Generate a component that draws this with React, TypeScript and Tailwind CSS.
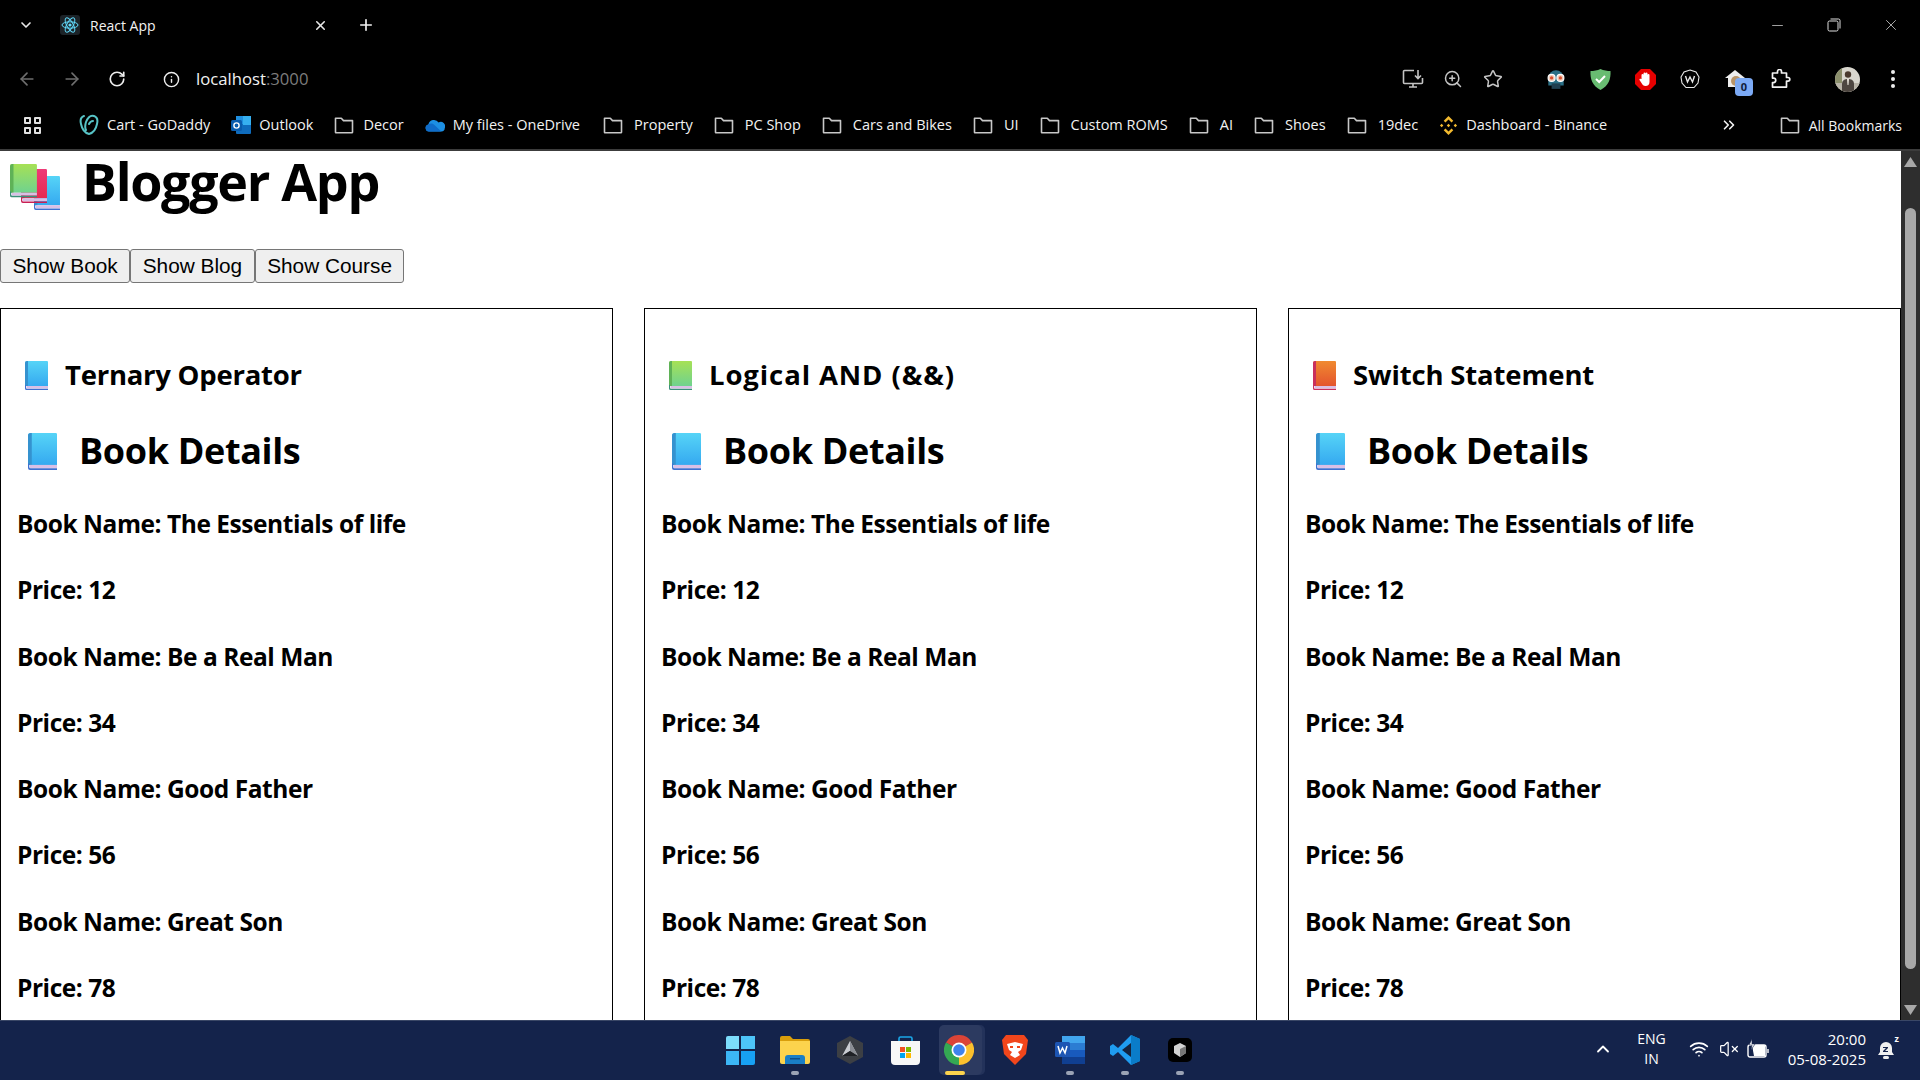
import React from 'react';
import { ChevronDown, X, Plus, ArrowLeft, ArrowRight, RotateCw, Info, Star, ZoomIn, ChevronsRight, ChevronUp, Wifi, VolumeX, Minus } from 'lucide-react';

const bookRows = [
  'Book Name: The Essentials of life',
  'Price: 12',
  'Book Name: Be a Real Man',
  'Price: 34',
  'Book Name: Good Father',
  'Price: 56',
  'Book Name: Great Son',
  'Price: 78',
];

const cards = [
  { title: 'Ternary Operator', tone: 'blue', spacing: 'tracking-[-0.25px]' },
  { title: 'Logical AND (&&)', tone: 'green', spacing: 'tracking-[0.9px]' },
  { title: 'Switch Statement', tone: 'orange', spacing: 'tracking-[-0.15px]' },
];

const tones: Record<string, { top: string; bottom: string; spine: string; edge: string }> = {
  blue: { top: '#56d4f7', bottom: '#35a9f0', spine: '#3592cf', edge: '#3f6fd0' },
  green: { top: '#a6e155', bottom: '#6fd28f', spine: '#5fb257', edge: '#3a8f7a' },
  orange: { top: '#f08a30', bottom: '#e4542e', spine: '#c9305c', edge: '#c9305c' },
  pink: { top: '#ee3a78', bottom: '#e62a50', spine: '#c81f55', edge: '#c81f55' },
};

function GradientDefs() {
  return (
    <svg className="absolute w-0 h-0">
      <defs>
        {Object.keys(tones).map((tone) => (
          <linearGradient key={tone} id={`book-${tone}`} x1="0" y1="0" x2="0" y2="1">
            <stop offset="0" stopColor={tones[tone].top} />
            <stop offset="1" stopColor={tones[tone].bottom} />
          </linearGradient>
        ))}
      </defs>
    </svg>
  );
}

function BookShape({ tone }: { tone: string }) {
  const t = tones[tone];
  return (
    <>
      <path d="M2 0h20a1 1 0 0 1 1 1v24H0V2a2 2 0 0 1 2-2z" fill={`url(#book-${tone})`} />
      <path d="M2 0h1v25H0V2a2 2 0 0 1 2-2z" fill={t.spine} />
      <rect x="1.500" y="25" width="21.500" height="2.400" fill="#d9bfe6" />
      <path d="M0 24v3.400A1.600 1.600 0 0 0 1.600 29H23v-1.300H2a1 1 0 0 1-1-1V24z" fill={t.edge} />
    </>
  );
}

function BookIcon({ tone, className }: { tone: string; className: string }) {
  return (
    <svg viewBox="0 0 23 29" preserveAspectRatio="none" className={className}>
      <BookShape tone={tone} />
    </svg>
  );
}

function FolderIcon() {
  return (
    <svg viewBox="0 0 20 18" className="w-[20px] h-[18px] shrink-0" fill="none" stroke="#c8c8c8" strokeWidth="1.600">
      <path d="M1.500 2.200h5.800l2.200 2.400h9v11.600a.6.6 0 0 1-.6.6H2.100a.6.6 0 0 1-.6-.6z" strokeLinejoin="round" />
    </svg>
  );
}

function GoDaddyIcon() {
  return (
    <svg viewBox="0 0 20 22" className="w-[20px] h-[22px] shrink-0" fill="none" stroke="#57c3c6" strokeWidth="2" strokeLinecap="round">
      <path d="M5 2C2 3 1 6 2 10c1 5 4 9 8 10 4-1 7-5 8-10 1-4 0-7-3-8-3-1-6 1-8 6-1 3-1 6 0 8" />
      <path d="M10 10c1-2 3-3 4-3" />
    </svg>
  );
}

function OutlookIcon() {
  return (
    <svg viewBox="0 0 20 20" className="w-[20px] h-[20px] shrink-0">
      <rect x="5" y="1" width="15" height="9" fill="#1f8fe0" />
      <rect x="5" y="9" width="15" height="10" rx="1" fill="#0f6cbd" />
      <rect x="12" y="1" width="8" height="9" fill="#36b0f0" />
      <rect x="0" y="5" width="11" height="11" rx="1.500" fill="#0a5cad" />
      <circle cx="5.500" cy="10.500" r="2.600" fill="none" stroke="#fff" strokeWidth="1.400" />
    </svg>
  );
}

function OneDriveIcon() {
  return (
    <svg viewBox="0 0 20 14" className="w-[20px] h-[14px] shrink-0">
      <path d="M4 13.500a3.600 3.600 0 0 1-.6-7.100A5.600 5.600 0 0 1 13.600 4.500 4.400 4.400 0 0 1 19.800 10a3.600 3.600 0 0 1-3.400 3.500z" fill="#1c8fe3" />
      <path d="M4 13.500a3.600 3.600 0 0 1-.6-7.100 5 5 0 0 1 6 .6l7 6.500z" fill="#0f6cc9" />
    </svg>
  );
}

function BinanceIcon() {
  return (
    <svg viewBox="0 0 20 20" className="w-[19px] h-[19px] shrink-0" fill="#f3ba2f">
      <path d="M10 0l5 5-1.800 1.800L10 3.600 6.800 6.800 5 5z" />
      <path d="M10 20l5-5-1.800-1.800L10 16.400l-3.200-3.200L5 15z" />
      <path d="M2.800 8.200L4.600 10l-1.800 1.800L1 10zM17.200 8.200L19 10l-1.800 1.800L15.400 10zM10 8.200l1.800 1.800L10 11.800 8.200 10z" />
    </svg>
  );
}

function ReactFavicon() {
  return (
    <svg viewBox="0 0 20 20" className="w-[20px] h-[20px] shrink-0 rounded-[3px] bg-[#1c2328]" fill="none" stroke="#61dafb" strokeWidth="1">
      <circle cx="10" cy="10" r="1.600" fill="#61dafb" stroke="none" />
      <ellipse cx="10" cy="10" rx="8" ry="3.200" />
      <ellipse cx="10" cy="10" rx="8" ry="3.200" transform="rotate(60 10 10)" />
      <ellipse cx="10" cy="10" rx="8" ry="3.200" transform="rotate(120 10 10)" />
    </svg>
  );
}

function ToolbarExtras() {
  return (
    <div className="flex items-center">
      {/* install app */}
      <div className="w-[40px] flex justify-center">
        <svg viewBox="0 0 22 20" className="w-[22px] h-[20px]" fill="none" stroke="#c4c4c4" strokeWidth="1.600">
          <path d="M12 1.500H2.500a1 1 0 0 0-1 1v11a1 1 0 0 0 1 1h17a1 1 0 0 0 1-1V9" />
          <path d="M16 1v8M13 6.500l3 3 3-3M7 18h8M11 15v3" />
        </svg>
      </div>
      <div className="w-[40px] flex justify-center"><ZoomIn size={20} color="#c4c4c4" strokeWidth={1.800} /></div>
      <div className="w-[40px] flex justify-center"><Star size={20} color="#c4c4c4" strokeWidth={1.800} /></div>
      <div className="w-[20px]" />
      {/* extensions */}
      <div className="w-[45px] flex justify-center">
        <svg viewBox="0 0 20 20" className="w-[22px] h-[22px]">
          <path d="M3 9a7 7 0 0 1 14 0v7H3z" fill="#2a6f86" />
          <circle cx="6" cy="9" r="3.200" fill="#f1c9b5" stroke="#fff" strokeWidth="1" />
          <circle cx="14" cy="9" r="3.200" fill="#f1c9b5" stroke="#fff" strokeWidth="1" />
          <circle cx="6" cy="9" r="1.500" fill="#d8502f" />
          <circle cx="14" cy="9" r="1.500" fill="#d8502f" />
          <path d="M6 14h8v5H6z" fill="#1f3f50" />
        </svg>
      </div>
      <div className="w-[45px] flex justify-center">
        <svg viewBox="0 0 21 21" className="w-[21px] h-[21px]">
          <path d="M10.500 0c3 1.500 7 2 10 2 .5 8-2 15-10 19C2.500 17 0 10 .500 2c3 0 7-.5 10-2z" fill="#68bc71" />
          <path d="M6 10l3.200 3L15 7" fill="none" stroke="#fff" strokeWidth="2" />
        </svg>
      </div>
      <div className="w-[45px] flex justify-center">
        <svg viewBox="0 0 21 21" className="w-[21px] h-[21px]">
          <path d="M6 0h9l6 6v9l-6 6H6l-6-6V6z" fill="#e60000" />
          <path d="M6.500 10V6a1 1 0 0 1 2 0V4.500a1 1 0 0 1 2 0 1 1 0 0 1 2 0V6a1 1 0 0 1 2 0v7c0 2.500-1.500 4-4 4-2 0-3-1-4-3l-2-3c-.5-1 .8-1.800 1.500-1z" fill="#fff" />
        </svg>
      </div>
      <div className="w-[44px] flex justify-center">
        <svg viewBox="0 0 20 20" className="w-[20px] h-[20px]" fill="none" stroke="#e8e8e8">
          <path d="M10 1l6 2 3 5-1 6-4 4.500H6L2 14 1 8l3-5z" strokeWidth="1.100" />
          <path d="M5.500 7l2 6 2.500-5 2.500 5 2-6" strokeWidth="1.400" />
        </svg>
      </div>
      <div className="w-[46px] flex justify-center relative">
        <svg viewBox="0 0 20 20" className="w-[20px] h-[20px]">
          <path d="M10 1l10 8h-3v9H3V9H0z" fill="#ededed" />
          <circle cx="11" cy="12" r="5" fill="#b89468" />
        </svg>
        <span className="absolute left-[23px] top-[9px] w-[18px] h-[18px] rounded-[4px] bg-[#7caaf5] text-[#10203c] text-[11px] font-bold flex items-center justify-center">0</span>
      </div>
      <div className="w-[46px] flex justify-center">
        <svg viewBox="0 0 20 20" className="w-[20px] h-[20px]" fill="none" stroke="#f2f2f2" strokeWidth="1.700" strokeLinejoin="round">
          <path d="M1.500 4h5V2.500a2 2 0 0 1 4 0V4h5v4.500h1.500a1.800 1.800 0 0 1 0 3.600h-1.500v6H1.500v-4.500h1a2 2 0 0 0 0-4.500h-1z" />
        </svg>
      </div>
      <div className="w-[20px]" />
      <div className="w-[46px] flex justify-center">
        <svg viewBox="0 0 25 25" className="w-[25px] h-[25px] rounded-full">
          <rect width="25" height="25" fill="#d9d7ce" />
          <rect x="0" y="0" width="7" height="25" fill="#8b8f6c" />
          <rect x="0" y="16" width="25" height="9" fill="#b8b4a8" />
          <circle cx="13" cy="7.500" r="3.200" fill="#4a3a2e" />
          <path d="M7 25v-8c0-4 3-5 6-5s6 1 6 5v8z" fill="#4d4640" />
          <path d="M12 12h2l-.5 6h-1z" fill="#e9e4da" />
        </svg>
      </div>
      <div className="w-[46px] flex flex-col items-center gap-[3px]">
        <span className="w-[4px] h-[4px] rounded-full bg-[#ececec]" />
        <span className="w-[4px] h-[4px] rounded-full bg-[#ececec]" />
        <span className="w-[4px] h-[4px] rounded-full bg-[#ececec]" />
      </div>
    </div>
  );
}

function BrowserChrome() {
  return (
    <div className="bg-black text-[#f2f2f2] h-[151px] border-b-2 border-[#3c3c3c] shrink-0 relative z-10 font-['Open_Sans',sans-serif]">
      {/* tab strip */}
      <div className="h-[50px] flex items-center">
        <ChevronDown size={16} strokeWidth={2.500} className="ml-[18px] text-[#e8e8e8]" />
        <div className="ml-[26px]"><ReactFavicon /></div>
        <span className="ml-[10px] w-[223px] text-[14px]">React App</span>
        <X size={15} strokeWidth={2.500} className="text-[#e8e8e8]" />
        <Plus size={18} strokeWidth={2.200} className="ml-[29px]" />
        <div className="ml-auto flex items-center pr-[20px] gap-[41px]">
          <Minus size={17} color="#a0a0a0" strokeWidth={1.400} />
          <svg viewBox="0 0 14 14" className="w-[14px] h-[14px]" fill="none" stroke="#e0e0e0" strokeWidth="1">
            <rect x="1" y="3" width="10" height="10" rx="1.500" />
            <path d="M3.500 1h8a1.500 1.500 0 0 1 1.500 1.500v8" />
          </svg>
          <X size={18} color="#e0e0e0" strokeWidth={1} />
        </div>
      </div>
      {/* toolbar */}
      <div className="h-[58px] flex items-center">
        <ArrowLeft size={20} color="#6e6e6e" className="ml-[17px]" />
        <ArrowRight size={20} color="#6e6e6e" className="ml-[25px]" />
        <RotateCw size={18} color="#eeeeee" strokeWidth={2.200} className="ml-[26px]" />
        <Info size={17} color="#eeeeee" className="ml-[37px]" />
        <span className="ml-[16px] text-[16.7px]">localhost<span className="text-[#7c7c7c]">:3000</span></span>
        <div className="ml-auto pr-[4px]"><ToolbarExtras /></div>
      </div>
      {/* bookmarks */}
      <div className="h-[34px] flex items-center text-[14.5px] whitespace-nowrap">
        <div className="ml-[24px] w-[17px] h-[17px] grid grid-cols-2 gap-[3px]">
          <span className="border-[2px] border-[#e0e0e0] rounded-[1px]" />
          <span className="border-[2px] border-[#e0e0e0] rounded-[1px]" />
          <span className="border-[2px] border-[#e0e0e0] rounded-[1px]" />
          <span className="border-[2px] border-[#e0e0e0] rounded-[1px]" />
        </div>
        <div className="ml-[38px] flex items-center gap-[21px]">
          <div className="flex items-center gap-[8px]"><GoDaddyIcon /><span>Cart - GoDaddy</span></div>
          <div className="flex items-center gap-[8px]"><OutlookIcon /><span>Outlook</span></div>
          <div className="flex items-center gap-[9px]"><FolderIcon /><span>Decor</span></div>
          <div className="flex items-center gap-[8px] mr-[2px]"><OneDriveIcon /><span>My files - OneDrive</span></div>
          {['Property', 'PC Shop', 'Cars and Bikes', 'UI', 'Custom ROMS', 'AI', 'Shoes', '19dec'].map((n) => (
            <div key={n} className="flex items-center gap-[11px]"><FolderIcon /><span>{n}</span></div>
          ))}
          <div className="flex items-center gap-[8px]"><BinanceIcon /><span>Dashboard - Binance</span></div>
        </div>
        <div className="ml-auto flex items-center pr-[18px]">
          <ChevronsRight size={18} strokeWidth={2.200} className="mr-[42px]" />
          <FolderIcon />
          <span className="ml-[9px] text-[14px]">All Bookmarks</span>
        </div>
      </div>
    </div>
  );
}

function Card({ title, tone, spacing }: { title: string; tone: string; spacing: string }) {
  return (
    <div className="border border-black px-[16px] pb-[40px] font-['Open_Sans',sans-serif] font-bold text-black">
      <div className={`h-[40px] mt-[46px] flex items-center text-[27.500px] ${spacing}`}>
        <BookIcon tone={tone} className="w-[23px] h-[29px] ml-[8px]" />
        <span className="ml-[17px]">{title}</span>
      </div>
      <div className="h-[48px] mt-[32px] -mb-[1px] flex items-center text-[36px] tracking-[-0.35px]">
        <BookIcon tone="blue" className="w-[29px] h-[37px] ml-[11px]" />
        <span className="ml-[22px]">Book Details</span>
      </div>
      {bookRows.map((row, idx) => (
        <p key={idx} className="h-[32px] mt-[34.300px] flex items-center text-[24.500px] tracking-[-0.45px]">{row}</p>
      ))}
    </div>
  );
}

function Scrollbar() {
  return (
    <div className="w-[19px] shrink-0 bg-[#2e2e2e] flex flex-col items-center">
      <svg viewBox="0 0 13 10" className="w-[13px] h-[10px] mt-[6px] shrink-0" fill="#a8a8a8"><path d="M6.500 0L13 10H0z" /></svg>
      <div className="w-[11px] mt-[41px] flex-1 bg-[#a8a8a8] rounded-t-full rounded-b-full" />
      <svg viewBox="0 0 13 10" className="w-[13px] h-[10px] mt-[36px] mb-[5px] shrink-0" fill="#a8a8a8"><path d="M0 0h13L6.500 10z" /></svg>
    </div>
  );
}

function Page() {
  return (
    <div className="flex-1 min-h-0 flex">
      <div className="flex-1 min-w-0 bg-white">
        <div className="flex items-center h-[60px] pl-[10px] font-['Open_Sans',sans-serif] font-bold text-black">
          <svg viewBox="0 0 50 46" className="w-[50px] h-[46px] shrink-0 mt-[11px]">
            <g transform="translate(24 12) scale(1.13 1.17)"><BookShape tone="blue" /></g>
            <g transform="translate(11 5) scale(1.13 1.17)"><BookShape tone="pink" /></g>
            <g transform="scale(1.17 1.15)"><BookShape tone="green" /></g>
          </svg>
          <h1 className="ml-[22px] text-[52px] tracking-[-1.300px] leading-[60px]">Blogger App</h1>
        </div>
        <div className="flex mt-[38px] font-['Liberation_Sans',sans-serif] text-[20.800px] text-black">
          {['Show Book', 'Show Blog', 'Show Course'].map((label) => (
            <button key={label} className="h-[34px] px-[11.500px] bg-[#efefef] border border-[#767676] rounded-[3px]">{label}</button>
          ))}
        </div>
        <div className="grid grid-cols-3 gap-[31px] mt-[25px]">
          {cards.map((c) => (
            <Card key={c.title} title={c.title} tone={c.tone} spacing={c.spacing} />
          ))}
        </div>
      </div>
      <Scrollbar />
    </div>
  );
}

function TaskIcon({ children, dot }: { children: React.ReactNode; dot?: boolean }) {
  return (
    <div className="w-[55px] h-[60px] relative flex items-center justify-center">
      {children}
      {dot && <span className="absolute bottom-[5px] w-[8px] h-[4px] rounded-full bg-[#9ba3b5]" />}
    </div>
  );
}

function Taskbar() {
  return (
    <div className="h-[60px] shrink-0 relative z-10 bg-[#14234b] border-t border-[#3a4766] grid grid-cols-[1fr_auto_1fr] text-white font-['Open_Sans',sans-serif]">
      <div />
      <div className="flex items-center -mt-[1px]">
        <TaskIcon>
          <div className="w-[29px] h-[29px] grid grid-cols-2 gap-[1.500px]">
            <span className="bg-[#7cdcfb] rounded-tl-[2px]" />
            <span className="bg-[#4dc4f8]" />
            <span className="bg-[#3cb6f6]" />
            <span className="bg-[#17a0f3] rounded-br-[2px]" />
          </div>
        </TaskIcon>
        <TaskIcon dot>
          <svg viewBox="0 0 30 28" className="w-[30px] h-[28px]">
            <path d="M0 2a2 2 0 0 1 2-2h8l3 3h15a2 2 0 0 1 2 2v4H0z" fill="#d99e0b" />
            <path d="M0 5h30v21a2 2 0 0 1-2 2H2a2 2 0 0 1-2-2z" fill="#fcd34d" />
            <path d="M5 22a3 3 0 0 1 3-3h14a3 3 0 0 1 3 3v6H5z" fill="#1a7fc6" />
            <rect x="10" y="22" width="10" height="1.500" fill="#0c4f8b" />
          </svg>
        </TaskIcon>
        <TaskIcon>
          <svg viewBox="0 0 26 28" className="w-[26px] h-[28px]">
            <path d="M13 0l13 7v14l-13 7L0 21V7z" fill="#3c3f44" />
            <path d="M13 5L5 20l8-5 8 5z" fill="#c9ccd1" />
            <path d="M13 5l8 15-8-5z" fill="#8b8e94" />
            <path d="M5 20h16l-8-5z" fill="#1f2125" />
          </svg>
        </TaskIcon>
        <TaskIcon>
          <svg viewBox="0 0 29 29" className="w-[29px] h-[29px]">
            <path d="M8 7V2.500A1.500 1.500 0 0 1 9.500 1h10A1.500 1.500 0 0 1 21 2.500V7" fill="none" stroke="#1aa7e8" strokeWidth="1.600" />
            <path d="M0 5h29v20a4 4 0 0 1-4 4H4a4 4 0 0 1-4-4z" fill="#f7f7f7" />
            <rect x="9" y="11" width="5" height="5" fill="#f25022" />
            <rect x="15" y="11" width="5" height="5" fill="#7fba00" />
            <rect x="9" y="17" width="5" height="5" fill="#00a4ef" />
            <rect x="15" y="17" width="5" height="5" fill="#ffb900" />
          </svg>
        </TaskIcon>
        <TaskIcon>
          <span className="absolute left-[8px] top-[5px] w-[44px] h-[50px] rounded-[5px] bg-[#23325a]" />
          <span className="absolute left-[6px] top-[5px] w-[43px] h-[50px] rounded-[5px] bg-[#2c3a60]" />
          <svg viewBox="0 0 30 30" className="w-[30px] h-[30px] relative -translate-x-[1px]">
            <path d="M15 15L2 7.500A15 15 0 0 1 28 7.500z" fill="#db4437" />
            <path d="M15 15L28 7.500A15 15 0 0 1 15 30z" fill="#fbc02d" />
            <path d="M15 15L15 30A15 15 0 0 1 2 7.500z" fill="#34a853" />
            <circle cx="15" cy="15" r="7.500" fill="#fff" />
            <circle cx="15" cy="15" r="5.800" fill="#3f83ee" />
          </svg>
          <span className="absolute bottom-[5px] left-[12px] w-[20px] h-[4px] rounded-full bg-[#fcd34d]" />
        </TaskIcon>
        <TaskIcon>
          <svg viewBox="0 0 26 30" className="w-[26px] h-[30px]">
            <path d="M4 0h18l4 5-2 14-11 11L2 19 0 5z" fill="#f1461c" />
            <path d="M5 9l8-2 8 2-2 6-3 2 2 3-5 3-5-3 2-3-3-2z" fill="#fff" />
            <path d="M8 11h3v2H8zM15 11h3v2h-3z" fill="#f1461c" />
          </svg>
        </TaskIcon>
        <TaskIcon dot>
          <svg viewBox="0 0 30 28" className="w-[30px] h-[28px]">
            <rect x="7" y="0" width="23" height="28" rx="1.500" fill="#2b7cd3" />
            <rect x="7" y="0" width="23" height="7" fill="#41a5ee" />
            <rect x="7" y="14" width="23" height="7" fill="#185abd" />
            <rect x="7" y="21" width="23" height="7" fill="#103f91" />
            <rect x="0" y="6" width="15" height="15" rx="1.500" fill="#1d55b3" />
            <path d="M3 10l2 7 2.500-5 2.500 5 2-7" fill="none" stroke="#fff" strokeWidth="1.500" />
          </svg>
        </TaskIcon>
        <TaskIcon dot>
          <svg viewBox="0 0 30 30" className="w-[30px] h-[30px]">
            <path d="M21 0l9 4v22l-9 4L8 17l-5 4-3-2v-8l3-2 5 4z" fill="#1f9cf0" />
            <path d="M21 0l9 4v22l-9 4z" fill="#0a7cc9" />
            <path d="M21 8v14l-9-7z" fill="#14233f" />
          </svg>
        </TaskIcon>
        <TaskIcon dot>
          <div className="w-[24px] h-[24px] rounded-[5px] bg-black flex items-center justify-center">
            <svg viewBox="0 0 14 14" className="w-[14px] h-[14px]">
              <path d="M7 0l6 3v7l-6 4-6-4V3z" fill="#d4d4d4" />
              <path d="M7 6l6-3v7l-6 4z" fill="#777777" />
            </svg>
          </div>
        </TaskIcon>
      </div>
      <div className="flex items-center justify-end text-[14px] leading-[20px] pb-[3px]">
        <ChevronUp size={20} strokeWidth={2.200} className="mr-[24px]" />
        <div className="text-center mr-[23.500px]"><div>ENG</div><div>IN</div></div>
        <Wifi size={20} className="mr-[10px]" />
        <VolumeX size={20} strokeWidth={1.500} className="mr-[7.500px]" />
        <svg viewBox="0 0 22 20" className="w-[22px] h-[20px] mr-[19px]" fill="none" stroke="#fff" strokeWidth="1.400">
          <rect x="1" y="6" width="18" height="12" rx="2" />
          <path d="M5 6h12a1 1 0 0 1 1 1v10H7z" fill="#fff" stroke="none" />
          <path d="M21 10v4" />
          <path d="M5 0L2 6h3l-1 5 4-6H5z" fill="#fff" stroke="#14234b" strokeWidth=".6" />
        </svg>
        <div className="text-right mr-[11px] text-[15px]"><div>20:00</div><div>05-08-2025</div></div>
        <div className="relative mr-[25px]">
          <svg viewBox="0 0 18 20" className="w-[18px] h-[20px]" fill="#f0f0f0">
            <path d="M9 3a6 6 0 0 1 6 6v4l2 3H1l2-3V9a6 6 0 0 1 6-6z" />
            <rect x="6" y="17" width="6" height="3" rx="1.500" />
            <path d="M6 8h5v1l-3 3h3v1H6v-1l3-3H6z" fill="#14234b" />
          </svg>
          <span className="absolute -right-[4px] -top-[5px] text-[9px] font-bold leading-none">z</span>
        </div>
      </div>
    </div>
  );
}

export default function App() {
  return (
    <div className="w-[1920px] h-[1080px] flex flex-col overflow-hidden">
      <GradientDefs />
      <BrowserChrome />
      <Page />
      <Taskbar />
    </div>
  );
}
